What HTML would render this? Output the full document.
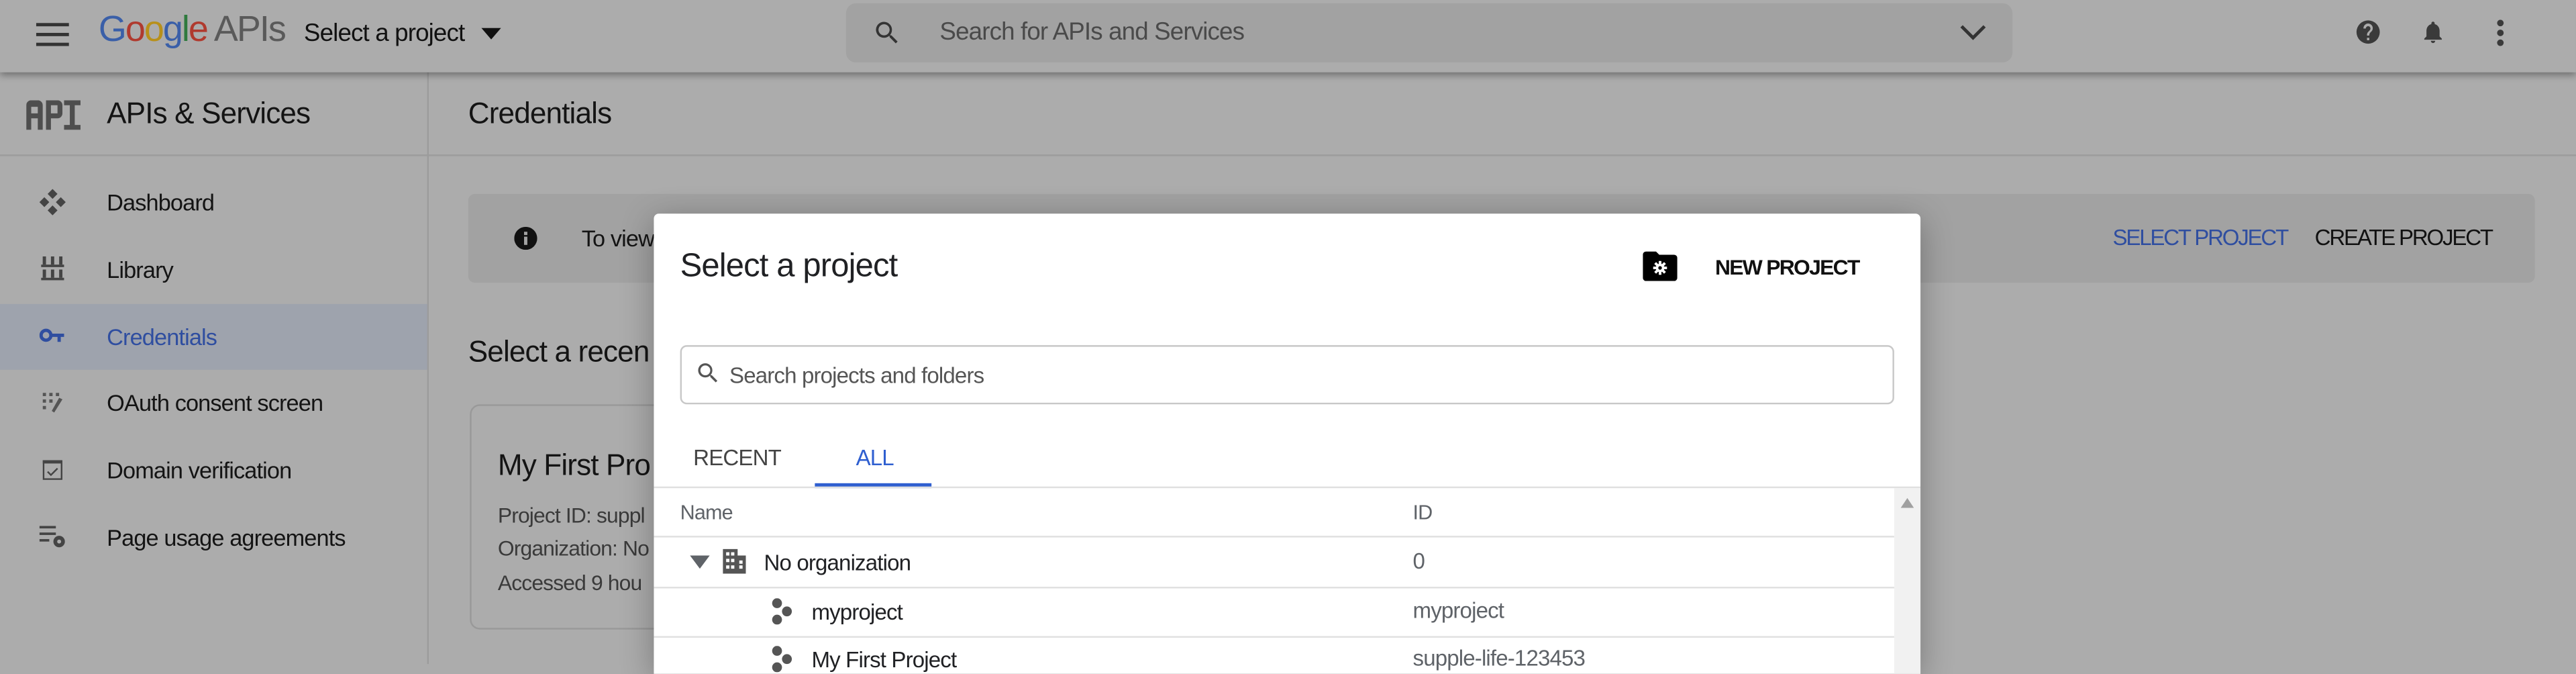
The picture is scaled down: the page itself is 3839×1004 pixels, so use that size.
<!DOCTYPE html>
<html><head><meta charset="utf-8"><style>
html,body{margin:0;padding:0;width:3839px;height:985px;overflow:hidden;background:#acacac;}
#w{position:absolute;left:0;top:0;width:1568px;height:402.3px;transform:scale(2.4483);transform-origin:0 0;font-family:"Liberation Sans",Arial,sans-serif;color:#141414;letter-spacing:-0.35px;}
.a{position:absolute;white-space:nowrap;}
svg{position:absolute;}
</style></head><body><div id="w">
<div class="a" style="left:0;top:0;width:1568px;height:44px;background:#acacac;box-shadow:0 2px 4px rgba(0,0,0,.35);z-index:2"></div>
<div style="position:absolute;left:0;top:0;width:1568px;height:44px;z-index:3">
<svg style="left:22px;top:13px" width="20" height="16" viewBox="0 0 20 16"><rect y="1" width="20" height="2" fill="#333"/><rect y="7" width="20" height="2" fill="#333"/><rect y="13" width="20" height="2" fill="#333"/></svg>
<div class="a" style="left:60px;top:5px;font-size:22px;letter-spacing:-0.8px"><span style="color:#3a5fa8">G</span><span style="color:#b03a2e">o</span><span style="color:#b8901a">o</span><span style="color:#3a5fa8">g</span><span style="color:#2f7a3e">l</span><span style="color:#b03a2e">e</span> <span style="color:#5a5a5a">APIs</span></div>
<div class="a" style="left:185px;top:12px;font-size:15px;color:#111">Select a project</div>
<svg style="left:293px;top:17px" width="12" height="7"><path d="M0 0h12L6 7z" fill="#111"/></svg>
<div class="a" style="left:515px;top:2px;width:710px;height:36px;background:#a2a2a2;border-radius:6px"></div>
<svg style="left:531px;top:11px" width="18" height="18" viewBox="0 0 24 24"><path d="M15.5 14h-.8l-.3-.3A6.5 6.5 0 1 0 9.5 16a6.5 6.5 0 0 0 4.2-1.6l.3.3v.8l5 5 1.5-1.5-5-5zm-6 0a4.5 4.5 0 1 1 0-9 4.5 4.5 0 0 1 0 9z" fill="#333"/></svg>
<div class="a" style="left:572px;top:11px;font-size:15px;color:#4a4a4a">Search for APIs and Services</div>
<svg style="left:1193px;top:15px" width="16" height="10"><path d="M1 1l7 7 7-7" stroke="#333" stroke-width="2" fill="none"/></svg>
<svg style="left:1433px;top:11px" width="17" height="17" viewBox="0 0 24 24"><path d="M12 2a10 10 0 1 0 0 20 10 10 0 0 0 0-20zm1 17h-2v-2h2zm2.1-7.8l-.9.9C13.5 12.9 13 13.5 13 15h-2v-.5c0-1.1.4-2.1 1.2-2.8l1.2-1.3A2 2 0 1 0 10 9H8a4 4 0 1 1 7.1 2.2z" fill="#3a3a3a"/></svg>
<svg style="left:1473px;top:10px" width="16" height="19" viewBox="0 0 24 24"><path d="M12 22a2 2 0 0 0 2-2h-4a2 2 0 0 0 2 2zm6-6v-5c0-3-1.6-5.6-4.5-6.3V4a1.5 1.5 0 0 0-3 0v.7C7.6 5.4 6 8 6 11v5l-2 2v1h16v-1z" fill="#3a3a3a"/></svg>
<svg style="left:1518px;top:12px" width="8" height="16"><circle cx="4" cy="2" r="2" fill="#3a3a3a"/><circle cx="4" cy="8" r="2" fill="#3a3a3a"/><circle cx="4" cy="14" r="2" fill="#3a3a3a"/></svg>
</div>
<div class="a" style="left:260px;top:44px;width:1px;height:360px;background:#9c9c9c"></div>
<div class="a" style="left:0;top:94px;width:1568px;height:1px;background:#9c9c9c"></div>
<svg style="left:16px;top:61px" width="34" height="18" viewBox="0 0 34 18"><g fill="#4e4e4e"><path d="M0 3a3 3 0 0 1 3-3h4a3 3 0 0 1 3 3v15H7v-7H3v7H0zM3 4v4h4V4z"/><path d="M12 0h7a3 3 0 0 1 3 3v5a3 3 0 0 1-3 3h-4v7h-3zM15 3v5h4V3z"/><path d="M23 0h10v3h-3.5v12H33v3H23v-3h3.5V3H23z"/></g></svg>
<div class="a" style="left:65px;top:59px;font-size:18px">APIs &amp; Services</div>
<div class="a" style="left:0;top:185px;width:260px;height:40px;background:#9ea3ad"></div>
<svg style="left:24px;top:115px" width="16" height="16" viewBox="0 0 16 16"><g fill="#444"><path d="M8 0l3 3-3 3-3-3z"/><path d="M8 10l3 3-3 3-3-3z"/><path d="M0 8l3-3 3 3-3 3z"/><path d="M10 8l3-3 3 3-3 3z"/></g></svg>
<div class="a" style="left:65px;top:115px;font-size:14px">Dashboard</div>
<svg style="left:25px;top:156px" width="14" height="15"><g fill="#444"><rect x="1" y="0" width="2" height="5"/><rect x="6" y="0" width="2" height="5"/><rect x="11" y="0" width="2" height="5"/><rect x="0" y="5" width="14" height="1.5"/><rect x="1" y="8" width="2" height="5"/><rect x="6" y="8" width="2" height="5"/><rect x="11" y="8" width="2" height="5"/><rect x="0" y="13" width="14" height="1.5"/></g></svg>
<div class="a" style="left:65px;top:156px;font-size:14px">Library</div>
<svg style="left:24px;top:199px" width="16" height="10"><circle cx="4" cy="5" r="3" stroke="#2f4ea0" stroke-width="2" fill="none"/><path d="M7 4h8v2h-2v3h-2V6H7z" fill="#2f4ea0"/></svg>
<div class="a" style="left:65px;top:197px;font-size:14px;color:#2f4ea0">Credentials</div>
<svg style="left:26px;top:239px" width="12" height="13"><g fill="#555"><rect x="0" y="0" width="2" height="2"/><rect x="4" y="0" width="2" height="2"/><rect x="8" y="0" width="2" height="2"/><rect x="0" y="4" width="2" height="2"/><rect x="4" y="4" width="2" height="2"/><rect x="0" y="8" width="2" height="2"/><path d="M10 3l2 1-5 8-1.5-1z"/></g></svg>
<div class="a" style="left:65px;top:237px;font-size:14px">OAuth consent screen</div>
<svg style="left:26px;top:280px" width="12" height="12"><rect x="0.5" y="0.5" width="11" height="11" stroke="#444" fill="none"/><rect x="0" y="0" width="12" height="2" fill="#444"/><path d="M3 7l2 2 4-4" stroke="#444" fill="none"/></svg>
<div class="a" style="left:65px;top:278px;font-size:14px">Domain verification</div>
<svg style="left:24px;top:319px" width="17" height="15"><g fill="#444"><rect x="0" y="1" width="10" height="1.5"/><rect x="0" y="5" width="10" height="1.5"/><rect x="0" y="9" width="6" height="1.5"/><circle cx="12" cy="10.5" r="3.5"/></g><circle cx="12" cy="10.5" r="1.2" fill="#acacac"/></svg>
<div class="a" style="left:65px;top:319px;font-size:14px">Page usage agreements</div>
<div class="a" style="left:285px;top:59px;font-size:18px">Credentials</div>
<div class="a" style="left:285px;top:118px;width:1258px;height:54px;background:#a2a2a2;border-radius:4px"></div>
<svg style="left:313px;top:138px" width="14" height="14"><circle cx="7" cy="7" r="7" fill="#111"/><rect x="6" y="6" width="2" height="5" fill="#a2a2a2"/><rect x="6" y="3" width="2" height="2" fill="#a2a2a2"/></svg>
<div class="a" style="left:354px;top:137px;font-size:14px">To view</div>
<div class="a" style="left:1286px;top:137px;font-size:13.5px;color:#2f4ea0;letter-spacing:-0.9px">SELECT PROJECT</div>
<div class="a" style="left:1409px;top:137px;font-size:13.5px;color:#111;letter-spacing:-0.9px">CREATE PROJECT</div>
<div class="a" style="left:285px;top:204px;font-size:18px">Select a recen</div>
<div class="a" style="left:286px;top:246px;width:300px;height:135px;border:1px solid #999;border-radius:6px"></div>
<div class="a" style="left:303px;top:273px;font-size:18px">My First Pro</div>
<div class="a" style="left:303px;top:306px;font-size:13px;color:#3a3a3a">Project ID: suppl</div>
<div class="a" style="left:303px;top:326px;font-size:13px;color:#3a3a3a">Organization: No</div>
<div class="a" style="left:303px;top:347px;font-size:13px;color:#3a3a3a">Accessed 9 hou</div>
<div class="a" style="left:398px;top:130px;width:771px;height:280px;background:#fff;border-radius:3px 3px 0 0;box-shadow:0 4px 20px rgba(0,0,0,.3);overflow:hidden">
<div class="a" style="left:16px;top:21px;font-size:20px;color:#202124">Select a project</div>
<svg style="left:602px;top:23px" width="21" height="18" viewBox="0 0 21 18"><path d="M0 2a2 2 0 0 1 2-2h6l2 2h9a2 2 0 0 1 2 2v12a2 2 0 0 1-2 2H2a2 2 0 0 1-2-2z" fill="#000"/><g stroke="#fff" stroke-width="1.6"><path d="M10.5 5.8v8.4M6.3 10h8.4M7.5 7l6 6M13.5 7l-6 6"/></g><circle cx="10.5" cy="10" r="2.6" fill="#fff"/><circle cx="10.5" cy="10" r="1.1" fill="#000"/></svg>
<div class="a" style="left:646px;top:25px;font-size:13px;font-weight:bold;color:#111;letter-spacing:-0.7px">NEW PROJECT</div>
<div class="a" style="left:16px;top:80px;width:737px;height:34px;border:1px solid #c8c8c8;border-radius:4px"></div>
<svg style="left:25px;top:89px" width="16" height="16" viewBox="0 0 24 24"><path d="M15.5 14h-.8l-.3-.3A6.5 6.5 0 1 0 9.5 16a6.5 6.5 0 0 0 4.2-1.6l.3.3v.8l5 5 1.5-1.5-5-5zm-6 0a4.5 4.5 0 1 1 0-9 4.5 4.5 0 0 1 0 9z" fill="#555"/></svg>
<div class="a" style="left:46px;top:91px;font-size:13.5px;color:#555">Search projects and folders</div>
<div class="a" style="left:24px;top:141px;font-size:13.5px;color:#444">RECENT</div>
<div class="a" style="left:123px;top:141px;font-size:13.5px;color:#2f5fd0">ALL</div>
<div class="a" style="left:98px;top:164px;width:71px;height:3px;background:#2f5fd0"></div>
<div class="a" style="left:0;top:166px;width:771px;height:1px;background:#e0e0e0"></div>
<div class="a" style="left:755px;top:167px;width:16px;height:120px;background:#f1f1f1"></div>
<svg style="left:759px;top:173px" width="8" height="6"><path d="M0 6h8L4 0z" fill="#a0a0a0"/></svg>
<div class="a" style="left:16px;top:175px;font-size:12.5px;color:#5f6368">Name</div>
<div class="a" style="left:462px;top:175px;font-size:12.5px;color:#5f6368">ID</div>
<div class="a" style="left:0;top:196px;width:755px;height:1px;background:#e0e0e0"></div>
<svg style="left:22px;top:208px" width="12" height="8"><path d="M0 0h12L6 8z" fill="#5f6368"/></svg>
<svg style="left:42px;top:204px" width="14" height="15"><path d="M0 0h9v4h5v11H0z" fill="#555"/><g fill="#fff"><rect x="2" y="2" width="2" height="2"/><rect x="5" y="2" width="2" height="2"/><rect x="2" y="6" width="2" height="2"/><rect x="5" y="6" width="2" height="2"/><rect x="2" y="10" width="2" height="2"/><rect x="5" y="10" width="2" height="2"/><rect x="10" y="7" width="2" height="2"/><rect x="10" y="10" width="2" height="2"/></g></svg>
<div class="a" style="left:67px;top:205px;font-size:13.5px;color:#202124">No organization</div>
<div class="a" style="left:462px;top:204px;font-size:13.5px;color:#5f6368">0</div>
<div class="a" style="left:0;top:227px;width:755px;height:1px;background:#e0e0e0"></div>
<svg style="left:70px;top:234px" width="16" height="16"><g fill="#555"><circle cx="5" cy="3" r="3"/><circle cx="11" cy="8" r="3"/><circle cx="5" cy="13" r="3"/></g></svg>
<div class="a" style="left:96px;top:235px;font-size:13.5px;color:#202124">myproject</div>
<div class="a" style="left:462px;top:234px;font-size:13.5px;color:#5f6368">myproject</div>
<div class="a" style="left:0;top:257px;width:755px;height:1px;background:#e0e0e0"></div>
<svg style="left:70px;top:263px" width="16" height="16"><g fill="#555"><circle cx="5" cy="3" r="3"/><circle cx="11" cy="8" r="3"/><circle cx="5" cy="13" r="3"/></g></svg>
<div class="a" style="left:96px;top:264px;font-size:13.5px;color:#202124">My First Project</div>
<div class="a" style="left:462px;top:263px;font-size:13.5px;color:#5f6368">supple-life-123453</div>
</div>
</div></body></html>
